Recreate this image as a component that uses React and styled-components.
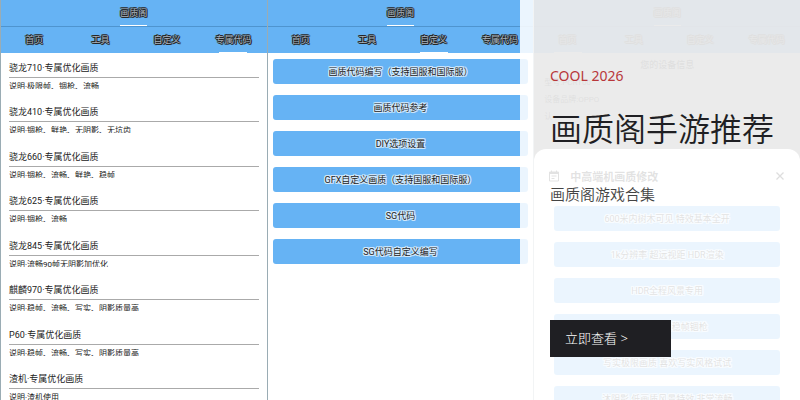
import React from "react";
import styled, { createGlobalStyle, css } from "styled-components";

const tabs = ["首页", "工具", "自定义", "专属代码"];

const presets = [
  { title: "骁龙710·专属优化画质", desc: "说明·极限帧、锢枪、流畅" },
  { title: "骁龙410·专属优化画质", desc: "说明·锢枪、鲜艳、无阴影、无坑齿" },
  { title: "骁龙660·专属优化画质", desc: "说明·锢枪、流畅、鲜艳、稳帧" },
  { title: "骁龙625·专属优化画质", desc: "说明·锢枪、流畅" },
  { title: "骁龙845·专属优化画质", desc: "说明·流畅90帧无阴影加优化" },
  { title: "麒麟970·专属优化画质", desc: "说明·稳帧、流畅、写实、阴影质量高" },
  { title: "P60·专属优化画质", desc: "说明·稳帧、流畅、写实、阴影质量高" },
  { title: "渣机·专属优化画质", desc: "说明·渣机使用" },
];

const tools = [
  "画质代码编写（支持国服和国际服）",
  "画质代码参考",
  "DIY选项设置",
  "GFX自定义画质（支持国服和国际服）",
  "SG代码",
  "SG代码自定义编写",
];

const options = [
  "600米内树木可见 特效基本全开",
  "1k分辨率 超远视距 HDR渲染",
  "HDR全程风景专用",
  "超高清画质稳帧锢枪",
  "写实极限画质 喜欢写实风格试试",
  "沐阴影 低画质风景特效 非常流畅",
];

function AppHeader({ active }) {
  return (
    <header>
      <TitleBar>
        <AppName>画质阁</AppName>
      </TitleBar>
      <TabBar>
        {tabs.map((tab) => (
          <Tab key={tab} type="button" $active={tab === active}>
            {tab}
          </Tab>
        ))}
      </TabBar>
    </header>
  );
}

export default function App() {
  return (
    <>
      <GlobalStyle />
      <Banner>
        <Screens>
          <Screen>
            <AppHeader active="专属代码" />
            <PresetList>
              {presets.map((item) => (
                <Preset key={item.title}>
                  <PresetTitle>{item.title}</PresetTitle>
                  <PresetDesc>{item.desc}</PresetDesc>
                </Preset>
              ))}
            </PresetList>
          </Screen>

          <Screen>
            <AppHeader active="自定义" />
            <ToolList>
              {tools.map((tool) => (
                <ToolButton key={tool} type="button">
                  {tool}
                </ToolButton>
              ))}
            </ToolList>
          </Screen>

          <Screen>
            <AppHeader active="首页" />
            <DeviceInfo>
              <h2>您的设备信息</h2>
              <p>型号:PCRT00</p>
              <p>设备品牌:OPPO</p>
              <p>认</p>
            </DeviceInfo>
            <Dim>
              <Sheet>
                <SheetHeader>
                  <svg width="12" height="12" viewBox="0 0 12 12" fill="none" stroke="currentColor">
                    <path d="M1.5 2h9v9h-9zM1.5 2.5h9M1.5 3.5h9M3.5 0.5v2M8.5 0.5v2M3.5 6h5M3.5 8.5h3" />
                  </svg>
                  <SheetTitle>中高端机画质修改</SheetTitle>
                  <CloseButton type="button" aria-label="关闭">
                    <svg width="8" height="8" viewBox="0 0 8 8" stroke="currentColor" strokeWidth="1.3">
                      <path d="M0.5 0.5l7 7M7.5 0.5l-7 7" />
                    </svg>
                  </CloseButton>
                </SheetHeader>
                <OptionList>
                  {options.map((option) => (
                    <ToolButton key={option} type="button">
                      {option}
                    </ToolButton>
                  ))}
                </OptionList>
              </Sheet>
            </Dim>
          </Screen>
        </Screens>

        <Promo>
          <Eyebrow>COOL 2026</Eyebrow>
          <Heading>画质阁手游推荐</Heading>
          <Subtitle>画质阁游戏合集</Subtitle>
          <MoreLink href="#more">立即查看 &gt;</MoreLink>
        </Promo>
      </Banner>
    </>
  );
}

const GlobalStyle = createGlobalStyle`
  * {
    box-sizing: border-box;
    margin: 0;
    padding: 0;
  }
  body {
    background: #fff;
    color: #222;
    font-family: "Noto Sans", "Noto Sans CJK SC", sans-serif;
  }
  button {
    border: 0;
    background: none;
    font-family: inherit;
    cursor: pointer;
  }
`;

const darkOutline = css`
  color: #a9b4bf;
  text-shadow: 1px 0 #222, -1px 0 #222, 0 1px #222, 0 -1px #222,
    1px 1px #333, -1px -1px #333;
`;

const Banner = styled.main`
  position: relative;
  height: 100vh;
  overflow: hidden;
`;

const Screens = styled.div`
  display: grid;
  grid-template-columns: repeat(3, 1fr);
  height: 100%;
`;

const Screen = styled.section`
  position: relative;
  display: flex;
  flex-direction: column;
  min-width: 0;
  min-height: 0;
  overflow: hidden;
  border-left: 1px solid #9aacb4;
  font-family: Roboto, "Noto Sans CJK SC", sans-serif;
`;

const TitleBar = styled.div`
  display: flex;
  justify-content: center;
  height: 27px;
  background: #66b3f4;
  border-bottom: 1px solid #4e94cf;
`;

const AppName = styled.h1`
  ${darkOutline}
  padding-top: 2px;
  font-size: 9px;
  font-weight: 400;
  line-height: 23px;
  border-bottom: 1px solid #fff;
`;

const TabBar = styled.nav`
  display: grid;
  grid-template-columns: repeat(4, 1fr);
  height: 26px;
  background: #66b3f4;
`;

const Tab = styled.button`
  ${darkOutline}
  display: flex;
  flex-direction: column;
  align-items: center;
  justify-content: space-between;
  padding-top: 2px;
  font-size: 9px;
  line-height: 23px;

  &::after {
    content: "";
    width: 28px;
    height: 1px;
    background: ${({ $active }) => ($active ? "#fff" : "transparent")};
  }
`;

const PresetList = styled.ul`
  display: flex;
  flex: 1;
  flex-direction: column;
  justify-content: space-between;
  padding: 7px 8px 0;
  list-style: none;
`;

const Preset = styled.li`
  display: flex;
  flex-direction: column;
  gap: 4px;
`;

const PresetTitle = styled.h2`
  border-bottom: 1px solid #aaa;
  font-size: 9px;
  font-weight: 400;
  line-height: 17px;
`;

const PresetDesc = styled.p`
  height: 7px;
  overflow: hidden;
  font-size: 8px;
  line-height: 10px;
`;

const ToolList = styled.div`
  display: flex;
  flex-direction: column;
  gap: 11px;
  padding: 6px 5px;
`;

const ToolButton = styled.button`
  flex-shrink: 0;
  height: 25px;
  border-radius: 3px;
  background: #66b3f4;
  color: #222;
  font-size: 9px;
  text-shadow: 1px 0 #d5eafc, -1px 0 #d5eafc, 0 1px #d5eafc, 0 -1px #d5eafc,
    1px 1px #d5eafc, -1px -1px #d5eafc, 1px -1px #d5eafc, -1px 1px #d5eafc;
`;

const DeviceInfo = styled.div`
  padding: 4px 10px;
  font-size: 8px;
  line-height: 17px;

  h2 {
    font-size: 9px;
    font-weight: 500;
    text-align: center;
  }
`;

/* covers the whole screen behind the bottom sheet */
const Dim = styled.div`
  position: absolute;
  inset: 0;
  display: flex;
  flex-direction: column;
  padding-top: 149px;
  background: rgba(0, 0, 0, 0.6);
`;

const Sheet = styled.div`
  flex: 1;
  min-height: 0;
  padding: 18px 20px 0;
  overflow: hidden;
  border-radius: 12px 12px 0 0;
  background: #fff;
`;

const SheetHeader = styled.div`
  display: flex;
  align-items: center;
  gap: 10px;
  height: 18px;
  margin: 0 -4px 0 -6px;
`;

const SheetTitle = styled.h2`
  flex: 1;
  font-size: 11px;
  font-weight: 700;
`;

const CloseButton = styled.button`
  display: flex;
`;

const OptionList = styled.div`
  display: flex;
  flex-direction: column;
  gap: 11px;
  padding-top: 21px;
`;

const Promo = styled.aside`
  position: absolute;
  inset: 0 0 0 auto;
  display: flex;
  flex-direction: column;
  align-items: flex-start;
  justify-content: center;
  width: 35%;
  padding: 24px 0 0 30px;
  background: rgba(255, 255, 255, 0.87);
`;

const Eyebrow = styled.p`
  color: #b8373a;
  font-size: 14px;
  line-height: 18px;
`;

const Heading = styled.h2`
  margin-top: 20px;
  color: #1f1f23;
  font-size: 32px;
  font-weight: 350;
  line-height: 48px;
  white-space: nowrap;
`;

const Subtitle = styled.p`
  margin-top: 30px;
  color: #444;
  font-size: 15px;
  font-weight: 350;
  line-height: 22px;
`;

const MoreLink = styled.a`
  min-width: 121px;
  margin-top: 115px;
  padding: 0 15px;
  background: #1f1f23;
  color: #fff;
  font-size: 13px;
  font-weight: 300;
  line-height: 37px;
  text-decoration: none;
`;
